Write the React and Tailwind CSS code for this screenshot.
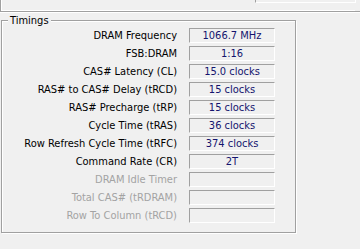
import React from "react";

const rows = [
  ["DRAM Frequency", "1066.7 MHz", false],
  ["FSB:DRAM", "1:16", false],
  ["CAS# Latency (CL)", "15.0 clocks", false],
  ["RAS# to CAS# Delay (tRCD)", "15 clocks", false],
  ["RAS# Precharge (tRP)", "15 clocks", false],
  ["Cycle Time (tRAS)", "36 clocks", false],
  ["Row Refresh Cycle Time (tRFC)", "374 clocks", false],
  ["Command Rate (CR)", "2T", false],
  ["DRAM Idle Timer", "", true],
  ["Total CAS# (tRDRAM)", "", true],
  ["Row To Column (tRCD)", "", true],
];

export default function App() {
  return (
    <div
      className="w-[360px] h-[249px] bg-[#f0f0f0] overflow-hidden text-[11px] leading-[15px] text-black"
      style={{ fontFamily: '"DejaVu Sans Condensed", "DejaVu Sans", sans-serif' }}
    >
      {/* cut-off group above */}
      <div className="h-[12px] flex">
        <div className="w-[355px] h-[12px] border-l border-b border-[#a0a0a0] shadow-[inset_1px_-1px_0_#fff] flex justify-end items-start">
          <div className="w-[100px] h-[3px] border-l border-b border-[#a0a0a0] border-b-white shadow-[1px_0_0_#fff]" />
        </div>
        <div className="flex-1 h-[12px] border-b border-[#a0a0a0]" />
      </div>
      <div className="h-[1px] bg-white mb-[7px]" />

      {/* Timings group */}
      <fieldset className="ml-[1px] w-[295px] h-[213px] border border-[#a0a0a0] shadow-[inset_1px_1px_0_#fff,1px_1px_0_#fff] relative">
        <div className="absolute -top-[8px] left-[6px] px-[2px] bg-[#f0f0f0] leading-[15px]">
          Timings
        </div>
        <div className="pt-[7px] grid grid-cols-[175px_86px] gap-x-[12px] gap-y-[3px]">
          {rows.map(([label, value, disabled]) => (
            <React.Fragment key={label}>
              <div
                className={`h-[15px] text-right whitespace-nowrap ${
                  disabled ? "text-[#a3a3a3]" : "text-black"
                }`}
              >
                {label}
              </div>
              <div className="h-[15px] border-t border-l border-[#a0a0a0] border-r-white border-b-white border-r border-b text-center text-[#14146e] leading-[13px]">
                {value}
              </div>
            </React.Fragment>
          ))}
        </div>
      </fieldset>
    </div>
  );
}
